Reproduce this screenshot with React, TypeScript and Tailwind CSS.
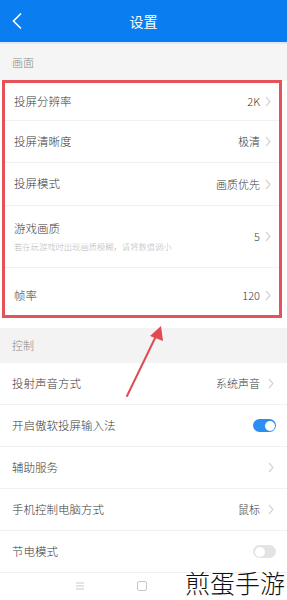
import React from "react";

const font = { fontFamily: '"Noto Sans CJK SC", "Noto Sans", sans-serif' };

function Chevron() {
  return (
    <svg width="6" height="11" viewBox="0 0 6 11" className="shrink-0">
      <path d="M1 1 L5 5.5 L1 10" fill="none" stroke="#d4d4d4" strokeWidth="1.2" />
    </svg>
  );
}

function Row({ label, value, sub, h = "h-[42px]", border = true, extra = "" }: { label: string; value?: string; sub?: string; h?: string; border?: boolean; extra?: string }) {
  return (
    <div className={`flex items-center ${h} ${extra} pl-[9px] pr-[8px] ${border ? "border-b border-[#f1f1f1]" : ""}`}>
      <div className="flex-1 flex flex-col justify-center">
        <div className="text-[11.5px] text-[#3a3a3a] leading-none">{label}</div>
        {sub && <div className="text-[8.3px] text-[#b8b8b8] leading-none mt-[7px] whitespace-nowrap">{sub}</div>}
      </div>
      {value && <span className="text-[11px] text-[#3a3a3a] mr-[5px] leading-none">{value}</span>}
      <Chevron />
    </div>
  );
}

function Toggle({ on }: { on: boolean }) {
  return (
    <div className={`w-[23px] h-[13px] rounded-full flex items-center px-[1.5px] ${on ? "bg-[#2b8ef0] justify-end" : "bg-[#e3e3e3] justify-start"}`}>
      <div className="w-[10px] h-[10px] rounded-full bg-white" />
    </div>
  );
}

function SwitchRow({ label, on }: { label: string; on: boolean }) {
  return (
    <div className="flex items-center h-[42px] pl-[12px] pr-[11px] border-b border-[#f1f1f1]">
      <div className="flex-1 text-[11.5px] text-[#3a3a3a] leading-none">{label}</div>
      <Toggle on={on} />
    </div>
  );
}

function PlainRow({ label, value }: { label: string; value?: string }) {
  return (
    <div className="flex items-center h-[42px] pl-[12px] pr-[13px] border-b border-[#f1f1f1]">
      <div className="flex-1 text-[11.5px] text-[#3a3a3a] leading-none">{label}</div>
      {value && <span className="text-[11px] text-[#3a3a3a] mr-[8px] leading-none">{value}</span>}
      <Chevron />
    </div>
  );
}

export default function App() {
  return (
    <div className="relative w-[287px] h-[600px] overflow-hidden bg-white font-light" style={font}>
      {/* Header */}
      <div className="h-[42px] bg-[#0a7ef1] flex items-center relative">
        <svg width="12" height="18" viewBox="0 0 12 18" className="ml-[11px]">
          <path d="M10 1.5 L2.5 9 L10 16.5" fill="none" stroke="#ffffff" strokeWidth="1.6" />
        </svg>
        <div className="absolute left-0 right-0 text-center text-white text-[14px] leading-none font-normal">设置</div>
      </div>
      <div className="h-[2px] bg-[#dfe8f3]" />
      {/* Section 画面 */}
      <div className="h-[37px] bg-[#f5f5f5] flex items-center pl-[12px] text-[11px] text-[#888]">画面</div>
      <div className="ml-[2px] mr-[5px] border-[3px] border-[#e6525a] -mt-[1px]">
        <Row label="投屏分辨率" value="2K" h="h-[38px]" />
        <Row label="投屏清晰度" value="极清" />
        <Row label="投屏模式" value="画质优先" h="h-[43px]" />
        <Row label="游戏画质" value="5" sub="若在玩游戏时出现画质模糊，请将数值调小" h="h-[62px]" />
        <Row label="帧率" value="120" h="h-[47px]" extra="pt-[8px]" border={false} />
      </div>
      <div className="h-[10px]" />
      {/* Section 控制 */}
      <div className="h-[35px] bg-[#f3f3f3] flex items-center pl-[12px] text-[11px] text-[#888]">控制</div>
      <PlainRow label="投射声音方式" value="系统声音" />
      <SwitchRow label="开启傲软投屏输入法" on={true} />
      <PlainRow label="辅助服务" />
      <PlainRow label="手机控制电脑方式" value="鼠标" />
      <SwitchRow label="节电模式" on={false} />
      {/* Bottom nav */}
      <div className="h-[26px] flex items-center">
        <div className="w-[80px]" />
        <svg width="10" height="10" viewBox="0 0 10 10" className="-ml-[5px]">
          <path d="M1 2 H9 M1 5 H9 M1 8 H9" stroke="#c8c8c8" strokeWidth="1" />
        </svg>
        <div className="w-[52px]" />
        <div className="w-[10px] h-[10px] border border-[#c8c8c8] rounded-[2px]" />
      </div>
      {/* Annotation arrow */}
      <svg className="absolute left-0 top-0 pointer-events-none" width="287" height="600">
        <line x1="127" y1="396" x2="157" y2="334" stroke="#e04b52" strokeWidth="2" strokeLinecap="round" />
        <polygon points="161,326 163,341 150,336" fill="#e04b52" />
      </svg>
      {/* Watermark */}
      <div className="absolute right-[2px] bottom-[4px] text-[25px] font-extralight text-[#111] leading-[1.1] whitespace-nowrap">煎蛋手游</div>
    </div>
  );
}
